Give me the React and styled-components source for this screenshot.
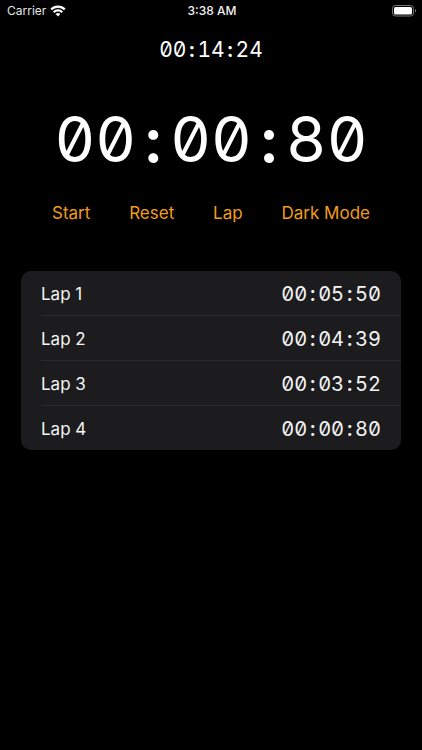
import React from "react";
import styled, { createGlobalStyle } from "styled-components";

const GlobalStyle = createGlobalStyle`
  *, *::before, *::after { box-sizing: border-box; }
  body {
    margin: 0;
    background: #000;
    color: #fff;
    font-family: Inter, "Liberation Sans", sans-serif;
  }
`;

const Screen = styled.main`
  min-height: 100vh;
  display: flex;
  flex-direction: column;
  background: #000;
`;

const StatusBar = styled.header`
  display: grid;
  grid-template-columns: 1fr auto 1fr;
  align-items: center;
  height: 20px;
  padding: 2px 5px 0 7px;
  font-size: 12px;
  line-height: 16px;
`;

const Carrier = styled.span`
  display: flex;
  align-items: center;
  gap: 4px;
  color: #e6e6e6;
`;

const Clock = styled.time`
  font-weight: 500;
  color: #f2f2f2;
`;

const BatterySlot = styled.span`
  display: flex;
  justify-content: flex-end;
`;

const Digits = styled.time`
  display: flex;
  justify-content: center;
  font-size: ${({ $size }) => $size}px;
  line-height: ${({ $line }) => $line}px;
  font-feature-settings: "tnum" 1, "zero" 1;
  white-space: nowrap;
`;

const Colon = styled.span`
  width: ${({ $width }) => $width}px;
  text-align: center;
  font-weight: 600;
`;

const Timers = styled.section`
  display: flex;
  flex-direction: column;
  gap: 37px;
  padding-top: 16px;
`;

const Controls = styled.nav`
  display: flex;
  justify-content: space-between;
  padding: 24px 52px 0;
`;

const TextButton = styled.button`
  padding: 0;
  border: 0;
  background: none;
  color: #f09c1c;
  font: inherit;
  font-size: 17px;
  line-height: 24px;
  white-space: nowrap;
  cursor: pointer;
`;

const LapList = styled.ol`
  list-style: none;
  margin: 46px 21px 0;
  padding: 0 0 0 20px;
  border-radius: 10px;
  background: #1c1c1e;
`;

const LapRow = styled.li`
  display: flex;
  align-items: center;
  justify-content: space-between;
  padding: 2px 20px 0 0;
  font-size: 17px;
  line-height: 42px;
  color: #f4f4f4;

  & + & {
    border-top: 1px solid #2a2a2c;
  }
`;

const WifiIcon = () => (
  <svg width="16" height="12" viewBox="0 0 16 12" aria-label="Wi-Fi" role="img">
    <g fill="none" stroke="#fff" strokeWidth="2.2">
      <path d="M1.2 4.4a9.6 9.6 0 0 1 13.6 0" />
      <path d="M3.7 7.2a6.1 6.1 0 0 1 8.6 0" />
    </g>
    <path d="M8 11.6 5.6 9.1a3.4 3.4 0 0 1 4.8 0z" fill="#fff" />
  </svg>
);

const BatteryIcon = () => (
  <svg width="25" height="12" viewBox="0 0 25 12" aria-label="Battery full" role="img">
    <rect x="0.5" y="0.5" width="21" height="10.5" rx="3" fill="none" stroke="#777" />
    <rect x="2" y="2" width="18" height="7.5" rx="1.6" fill="#fff" />
    <path d="M23 4.1c1.6.6 1.6 2.8 0 3.4z" fill="#777" />
  </svg>
);

const Time = ({ value, size, line, colon }) => {
  const [minutes, seconds, hundredths] = value.split(":");
  return (
    <Digits $size={size} $line={line}>
      <span>{minutes}</span>
      <Colon $width={colon}>:</Colon>
      <span>{seconds}</span>
      <Colon $width={colon}>:</Colon>
      <span>{hundredths}</span>
    </Digits>
  );
};

const laps = ["00:05:50", "00:04:39", "00:03:52", "00:00:80"];
const actions = ["Start", "Reset", "Lap", "Dark Mode"];

export default function App() {
  return (
    <>
      <GlobalStyle />
      <Screen>
        <StatusBar>
          <Carrier>
            Carrier
            <WifiIcon />
          </Carrier>
          <Clock>3:38 AM</Clock>
          <BatterySlot>
            <BatteryIcon />
          </BatterySlot>
        </StatusBar>
        <Timers>
          <Time value="00:14:24" size={21} line={28} colon={11} />
          <Time value="00:00:80" size={63} line={76} colon={34} />
        </Timers>
        <Controls>
          {actions.map((label) => (
            <TextButton key={label} type="button">{label}</TextButton>
          ))}
        </Controls>
        <LapList>
          {laps.map((time, index) => (
            <LapRow key={time}>
              <span>Lap {index + 1}</span>
              <Time value={time} size={20} line={42} colon={11} />
            </LapRow>
          ))}
        </LapList>
      </Screen>
    </>
  );
}
